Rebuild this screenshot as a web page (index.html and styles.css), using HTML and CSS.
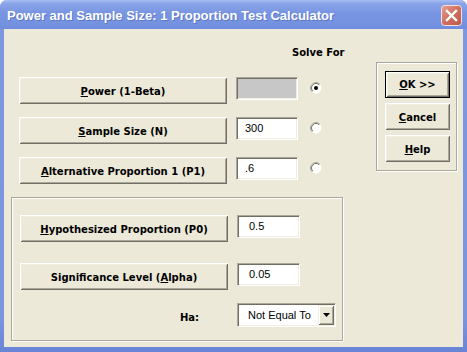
FILE: index.html
```html
<!DOCTYPE html>
<html>
<head>
<meta charset="utf-8">
<title>Power and Sample Size: 1 Proportion Test Calculator</title>
<link rel="stylesheet" href="styles.css">
</head>
<body>
<div class="window">
  <div class="titlebar">
    <span class="title">Power and Sample Size: 1 Proportion Test Calculator</span>
    <span class="close">
      <svg width="21" height="21" viewBox="0 0 21 21">
        <defs>
          <linearGradient id="cg" x1="0" y1="0" x2="1" y2="1">
            <stop offset="0" stop-color="#E7A293"/>
            <stop offset="0.5" stop-color="#CF6F60"/>
            <stop offset="1" stop-color="#BC5648"/>
          </linearGradient>
        </defs>
        <rect x="0.5" y="0.5" width="20" height="20" rx="3" ry="3" fill="url(#cg)" stroke="#F3E3E0"/>
        <path d="M6 6 L15 15 M15 6 L6 15" stroke="#fff" stroke-width="2.4" stroke-linecap="square"/>
      </svg>
    </span>
  </div>
  <div class="client">
    <div class="top">
      <div class="params">
        <div class="solve-head">Solve For</div>
        <div class="row">
          <button class="btn wide"><u>P</u>ower (1-Beta)</button>
          <div class="field disabled"></div>
          <span class="radio">
            <svg width="12" height="12" viewBox="0 0 12 12">
              <circle cx="6" cy="6" r="5.5" fill="#fff"/>
              <path d="M9.9 2.1 A5.5 5.5 0 0 0 2.1 9.9" stroke="#ACA899" fill="none"/>
              <path d="M9.2 2.8 A4.5 4.5 0 0 0 2.8 9.2" stroke="#716F64" fill="none"/>
              <circle cx="6" cy="6" r="2" fill="#000"/>
            </svg>
          </span>
        </div>
        <div class="row">
          <button class="btn wide"><u>S</u>ample Size (N)</button>
          <div class="field">300</div>
          <span class="radio">
            <svg width="12" height="12" viewBox="0 0 12 12">
              <circle cx="6" cy="6" r="5.5" fill="#fff"/>
              <path d="M9.9 2.1 A5.5 5.5 0 0 0 2.1 9.9" stroke="#ACA899" fill="none"/>
              <path d="M9.2 2.8 A4.5 4.5 0 0 0 2.8 9.2" stroke="#716F64" fill="none"/>
            </svg>
          </span>
        </div>
        <div class="row">
          <button class="btn wide"><u>A</u>lternative Proportion 1 (P1)</button>
          <div class="field">.6</div>
          <span class="radio">
            <svg width="12" height="12" viewBox="0 0 12 12">
              <circle cx="6" cy="6" r="5.5" fill="#fff"/>
              <path d="M9.9 2.1 A5.5 5.5 0 0 0 2.1 9.9" stroke="#ACA899" fill="none"/>
              <path d="M9.2 2.8 A4.5 4.5 0 0 0 2.8 9.2" stroke="#716F64" fill="none"/>
            </svg>
          </span>
        </div>
      </div>
      <div class="group actions">
        <button class="btn act default"><u>O</u>K &gt;&gt;</button>
        <button class="btn act"><u>C</u>ancel</button>
        <button class="btn act"><u>H</u>elp</button>
      </div>
    </div>
    <div class="group lower">
      <div class="lrow">
        <button class="btn wide"><u>H</u>ypothesized Proportion (P0)</button>
        <div class="field low">0.5</div>
      </div>
      <div class="lrow">
        <button class="btn wide">Significance Level (<u>A</u>lpha)</button>
        <div class="field low">0.05</div>
      </div>
      <div class="lrow harow">
        <span class="ha">Ha:</span>
        <div class="select">
          <span class="sel-text">Not Equal To</span>
          <span class="arrow">
            <svg width="7" height="4" viewBox="0 0 7 4"><path d="M0 0 H7 L3.5 4 Z" fill="#000"/></svg>
          </span>
        </div>
      </div>
    </div>
  </div>
</div>
</body>
</html>
```
FILE: styles.css
```css
html, body {
  margin: 0;
  padding: 0;
  background: #fff;
}

.window {
  width: 467px;
  height: 352px;
  box-sizing: border-box;
  background: linear-gradient(to bottom, #7D97E0 0%, #7B95DF 90%, #6A84D6 100%);
  border-radius: 7px 7px 0 0;
  overflow: hidden;
  display: flex;
  flex-direction: column;
}

.titlebar {
  height: 29px;
  flex: none;
  display: flex;
  align-items: center;
  justify-content: space-between;
  padding: 0 5px 0 7px;
  background: linear-gradient(to bottom, #A9BEF3 0%, #8AA4E9 12%, #7895E2 45%, #7592E1 85%, #6E8BDD 100%);
}

.title {
  font-family: "Liberation Sans", Arial, sans-serif;
  font-weight: bold;
  font-size: 13px;
  color: #fff;
  text-shadow: 1px 1px 0 rgba(60, 80, 160, 0.45);
  line-height: 16px;
  margin-top: 2px;
}

.close {
  display: flex;
  width: 21px;
  height: 21px;
  margin-top: 2px;
}

.client {
  flex: none;
  height: 318px;
  margin: 0 4px 5px 4px;
  background: #ECE9D8;
  display: flex;
  flex-direction: column;
}

.top {
  height: 168px;
  display: flex;
  align-items: flex-start;
  padding-left: 15px;
}

.params {
  width: 357px;
  margin-top: 18px;
}

.solve-head {
  font-family: "DejaVu Sans", sans-serif;
  font-weight: bold;
  font-size: 10px;
  line-height: 12px;
  height: 12px;
  margin-left: 273px;
  margin-bottom: 18px;
}

.row {
  display: flex;
  align-items: flex-start;
  margin-bottom: 13px;
}

.btn {
  font-family: "DejaVu Sans", sans-serif;
  font-weight: bold;
  font-size: 10px;
  color: #000;
  background: #ECE9D8;
  border: 0;
  margin: 0;
  padding: 1px 0 0 0;
  box-sizing: border-box;
  box-shadow: inset 1px 1px 0 #fff, inset -1px -1px 0 #716F64, inset 2px 2px 0 #F1EFE2, inset -2px -2px 0 #ACA899;
  text-align: center;
  flex: none;
}

.btn u {
  text-decoration: underline;
  text-underline-offset: 1px;
}

.wide {
  width: 208px;
  height: 27px;
}

.field {
  flex: none;
  width: 62px;
  height: 23px;
  margin-left: 9px;
  box-sizing: border-box;
  background: #fff;
  border: 1px solid;
  border-color: #ACA899 #fff #fff #ACA899;
  box-shadow: inset 1px 1px 0 #716F64, inset -1px -1px 0 #F1EFE2;
  font-family: "Liberation Sans", Arial, sans-serif;
  font-size: 11px;
  line-height: 21px;
  padding-left: 8px;
  color: #000;
}

.field.disabled {
  background: #C7C7C7;
}

.field.low {
  width: 63px;
  padding-left: 11px;
}

.radio {
  display: flex;
  width: 12px;
  height: 12px;
  margin-left: 12px;
  margin-top: 5px;
}

.group {
  box-sizing: border-box;
  border: 1px solid #ACA899;
  box-shadow: inset 1px 1px 0 #fff, 1px 1px 0 #fff;
}

.actions {
  width: 81px;
  height: 109px;
  margin-top: 33px;
  padding: 8px 0 0 8px;
  display: flex;
  flex-direction: column;
  gap: 5px;
}

.act {
  width: 65px;
  height: 27px;
}

.default {
  border: 1px solid #000;
  padding-top: 0;
}

.lower {
  width: 332px;
  height: 144px;
  margin-left: 7px;
  padding: 17px 0 0 8px;
  display: flex;
  flex-direction: column;
}

.lrow {
  display: flex;
  align-items: flex-start;
  margin-bottom: 21px;
}

.lrow.harow {
  margin-top: -8px;
  margin-bottom: 0;
  align-items: center;
}

.ha {
  width: 208px;
  box-sizing: border-box;
  padding-right: 29px;
  text-align: right;
  font-family: "DejaVu Sans", sans-serif;
  font-weight: bold;
  font-size: 10px;
  line-height: 12px;
  margin-top: 5px;
}

.select {
  width: 99px;
  height: 24px;
  margin-left: 9px;
  box-sizing: border-box;
  background: #fff;
  border: 1px solid;
  border-color: #ACA899 #fff #fff #ACA899;
  box-shadow: inset 1px 1px 0 #716F64, inset -1px -1px 0 #F1EFE2;
  display: flex;
  align-items: stretch;
  padding: 1px;
}

.sel-text {
  flex: 1;
  font-family: "Liberation Sans", Arial, sans-serif;
  font-size: 11px;
  line-height: 20px;
  padding-left: 9px;
  color: #000;
}

.arrow {
  width: 16px;
  background: #ECE9D8;
  box-shadow: inset 1px 1px 0 #F1EFE2, inset -1px -1px 0 #716F64, inset 2px 2px 0 #fff, inset -2px -2px 0 #ACA899;
  display: flex;
  align-items: center;
  justify-content: center;
}
```
